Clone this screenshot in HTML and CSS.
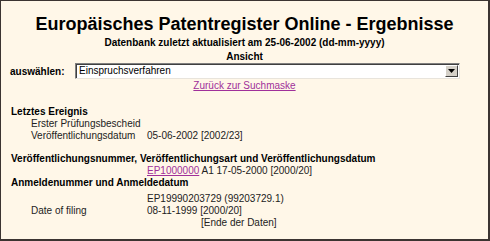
FILE: index.html
```html
<!DOCTYPE html>
<html lang="de">
<head>
<meta charset="utf-8">
<title>Europäisches Patentregister Online - Ergebnisse</title>
<link rel="stylesheet" href="styles.css">
</head>
<body>
<div class="page">
  <h1 class="title">Europäisches Patentregister Online - Ergebnisse</h1>
  <p class="sub">Datenbank zuletzt aktualisiert am 25-06-2002 (dd-mm-yyyy)</p>
  <p class="sub ansicht">Ansicht</p>
  <div class="pick">
    <span class="pick-label">auswählen:</span>
    <div class="select">
      <span class="select-value">Einspruchsverfahren</span>
      <span class="select-btn"><svg width="7" height="4" viewBox="0 0 7 4"><path d="M0 0h7L3.5 4z" fill="#000"/></svg></span>
    </div>
  </div>
  <p class="back"><a href="#">Zurück zur Suchmaske</a></p>

  <div class="data">
    <div class="head">Letztes Ereignis</div>
    <div class="full">Erster Prüfungsbescheid</div>
    <div class="label">Veröffentlichungsdatum</div><div class="val">05-06-2002 [2002/23]</div>

    <div class="head gap">Veröffentlichungsnummer, Veröffentlichungsart und Veröffentlichungsdatum</div>
    <div class="label"></div><div class="val"><a href="#">EP1000000</a> A1 17-05-2000 [2000/20]</div>
    <div class="head">Anmeldenummer und Anmeldedatum</div>
    <div class="label spaced"></div><div class="val spaced">EP19990203729 (99203729.1)</div>
    <div class="label">Date of filing</div><div class="val">08-11-1999 [2000/20]</div>
    <div class="label"></div><div class="val end">[Ende der Daten]</div>
  </div>
</div>
</body>
</html>
```
FILE: styles.css
```css
html, body {
  margin: 0;
  padding: 0;
}
body {
  background: #fff7e8;
  font-family: "Liberation Sans", Arial, sans-serif;
  font-size: 10px;
  color: #222;
}
.page {
  box-sizing: border-box;
  height: 241px;
  border-style: solid;
  border-color: #3b3431;
  border-width: 1px 2px 2px 1px;
  overflow: hidden;
}
.title {
  margin: 13px 0 0;
  font-size: 18px;
  line-height: 20px;
  font-weight: bold;
  color: #000;
  text-align: center;
}
.sub {
  margin: 3px 0 0;
  font-weight: bold;
  line-height: 12px;
  color: #000;
  text-align: center;
}
.ansicht {
  margin-top: 2px;
}
.pick {
  display: flex;
  align-items: center;
  padding-left: 9px;
  height: 16px;
}
.pick-label {
  font-weight: bold;
  color: #000;
  width: 65px;
}
.select {
  box-sizing: border-box;
  width: 385px;
  height: 16px;
  display: flex;
  background: #fff;
  border-style: solid;
  border-width: 1px;
  border-color: #808080 #e8e4dc #e8e4dc #808080;
  box-shadow: inset 1px 1px 0 #404040;
}
.select-value {
  flex: 1;
  padding: 1px 0 0 3px;
  line-height: 12px;
  color: #000;
}
.select-btn {
  box-sizing: border-box;
  width: 13px;
  margin: 1px 1px 1px 0;
  background: #d4d0c8;
  border-style: solid;
  border-width: 1px;
  border-color: #fff #404040 #404040 #fff;
  display: flex;
  align-items: center;
  justify-content: center;
}
.back {
  margin: 1px 0 0;
  line-height: 12px;
  text-align: center;
}
a {
  color: #a0309a;
  text-decoration: underline;
}
.data {
  margin-top: 14px;
  padding-left: 10px;
  display: grid;
  grid-template-columns: 20px 116px 1fr;
  line-height: 12px;
}
.head {
  grid-column: 1 / 4;
  font-weight: bold;
  color: #000;
}
.head.gap {
  margin-top: 11px;
}
.full {
  grid-column: 2 / 4;
}
.label {
  grid-column: 2;
}
.val {
  grid-column: 3;
}
.spaced {
  margin-top: 4px;
}
.end {
  padding-left: 54px;
}
```
